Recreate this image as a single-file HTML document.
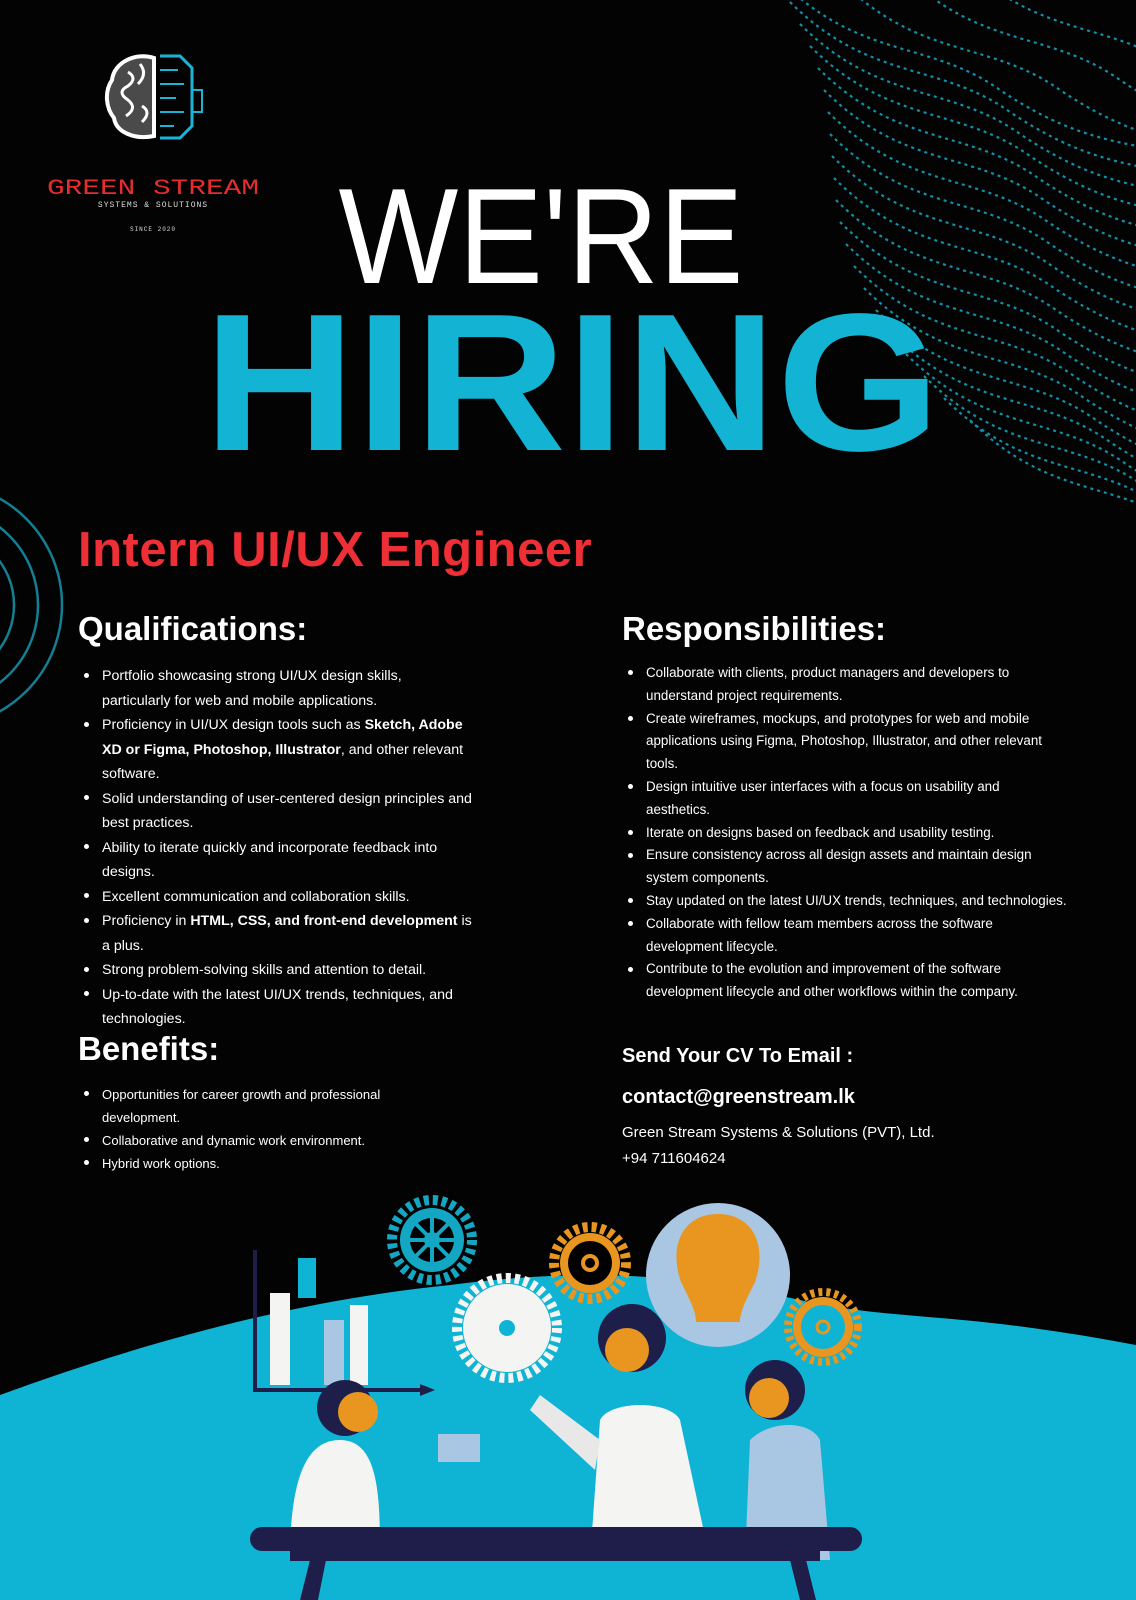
<!DOCTYPE html>
<html><head><meta charset="utf-8"><style>
*{margin:0;padding:0;box-sizing:border-box}
body{width:1136px;height:1600px;background:#030303;position:relative;overflow:hidden;font-family:"Liberation Sans","DejaVu Sans",sans-serif;color:#fff}
.abs{position:absolute}
ul{list-style:none}
li{position:relative;padding-left:24px}
li:before{content:"";position:absolute;left:6px;top:0.62em;width:5px;height:5px;border-radius:50%;background:#fff}
.q li{font-size:14.2px;line-height:24.5px}
.r li{font-size:13.4px;line-height:22.8px}
.b li{font-size:13px;line-height:23px}
h2{font-size:33px;font-weight:bold}
</style></head><body>
<svg class="abs" style="left:0;top:0" width="1136" height="1600">
<defs>
<path id="w" d="M780 -20 C860 60 930 40 1000 90 C1060 130 1100 140 1160 150" fill="none" stroke="#14a9c4" stroke-width="2.2" stroke-dasharray="3 4"/>
</defs>
<g opacity="0.85">
<use href="#w"/><use href="#w" transform="translate(10,22)"/><use href="#w" transform="translate(20,44)"/><use href="#w" transform="translate(30,66)"/><use href="#w" transform="translate(38,88)"/><use href="#w" transform="translate(44,110)"/><use href="#w" transform="translate(48,132)"/><use href="#w" transform="translate(50,154)"/><use href="#w" transform="translate(52,176)"/><use href="#w" transform="translate(54,198)"/><use href="#w" transform="translate(56,220)"/><use href="#w" transform="translate(60,242)"/><use href="#w" transform="translate(66,264)"/><use href="#w" transform="translate(74,286)"/><use href="#w" transform="translate(84,308)"/><use href="#w" transform="translate(96,330)"/><use href="#w" transform="translate(110,352)"/><use href="#w" transform="translate(126,374)"/><use href="#w" transform="translate(144,396)"/><use href="#w" transform="translate(164,418)"/><use href="#w" transform="translate(190,440)"/><use href="#w" transform="translate(60,0)"/><use href="#w" transform="translate(120,-10)"/><use href="#w" transform="translate(180,-20)"/>
</g>
<g fill="none" stroke="#137f92" stroke-width="2.5">
<circle cx="-60" cy="605" r="122"/>
<circle cx="-60" cy="605" r="98"/>
<circle cx="-60" cy="605" r="74"/>
</g>
<g transform="translate(158,96)">
<path d="M-4 -38 C-22 -44 -44 -34 -46 -16 C-54 -4 -52 12 -44 22 C-42 36 -24 44 -4 40 Z" fill="#4a4a4a" stroke="#fff" stroke-width="4"/>
<path d="M-30 -24 q10 6 0 14 q-12 6 0 14 q10 8 -2 16 M-18 -32 q8 10 -2 20 M-16 10 q10 6 0 16" fill="none" stroke="#fff" stroke-width="3"/>
<path d="M2 -40 L22 -40 L34 -28 L34 30 L22 42 L2 42" fill="none" stroke="#1ab5d6" stroke-width="3"/>
<path d="M2 -26 H20 M2 -12 H26 M2 2 H18 M2 16 H26 M2 30 H16" stroke="#1ab5d6" stroke-width="2"/>
<rect x="34" y="-6" width="10" height="22" fill="none" stroke="#1ab5d6" stroke-width="2"/>
</g>
<text x="153" y="194" text-anchor="middle" font-family="Liberation Mono,monospace" font-size="22" fill="#e52d2d" textLength="212" lengthAdjust="spacingAndGlyphs">GREEN STREAM</text>
<text x="153" y="207" text-anchor="middle" font-family="Liberation Mono,monospace" font-size="8" fill="#ddd" letter-spacing="1">SYSTEMS &amp; SOLUTIONS</text>
<text x="153" y="231" text-anchor="middle" font-family="Liberation Mono,monospace" font-size="6" fill="#ddd" letter-spacing="1">SINCE 2020</text>
<text x="541" y="283" text-anchor="middle" font-size="136" fill="#fff" textLength="405" lengthAdjust="spacingAndGlyphs">WE'RE</text>
<text x="572" y="450" text-anchor="middle" font-size="202" fill="#12b3d3" font-weight="bold" textLength="737" lengthAdjust="spacingAndGlyphs" transform="translate(572,450) scale(1,0.97) translate(-572,-450)">HIRING</text>
<path d="M0 1395 C150 1340 300 1300 450 1285 C600 1265 700 1278 800 1300 C900 1322 950 1310 1136 1345 L1136 1600 L0 1600 Z" fill="#0fb3d4"/>
<path d="M255 1250 V1390 H420" stroke="#1d1e4a" stroke-width="4" fill="none"/>
<path d="M420 1384 L435 1390 L420 1396 Z" fill="#1d1e4a"/>
<rect x="270" y="1293" width="20" height="92" fill="#f4f4f2"/>
<rect x="298" y="1258" width="18" height="40" fill="#0fb3d4"/>
<rect x="324" y="1320" width="20" height="65" fill="#a9c6e2"/>
<rect x="350" y="1305" width="18" height="80" fill="#f4f4f2"/>
<circle cx="432" cy="1240" r="40" fill="none" stroke="#14a7c4" stroke-width="10" stroke-dasharray="5 4"/>
<circle cx="432" cy="1240" r="32" fill="#14a7c4"/><circle cx="432" cy="1240" r="22" fill="#000"/><circle cx="432" cy="1240" r="8" fill="#14a7c4"/>
<path d="M432 1218 V1262 M410 1240 H454 M416 1224 L448 1256 M448 1224 L416 1256" stroke="#14a7c4" stroke-width="4"/>
<circle cx="590" cy="1263" r="36" fill="none" stroke="#e8961f" stroke-width="10" stroke-dasharray="5 4"/>
<circle cx="590" cy="1263" r="30" fill="#e8961f"/><circle cx="590" cy="1263" r="22" fill="#000"/><circle cx="590" cy="1263" r="7" fill="none" stroke="#e8961f" stroke-width="4"/>
<circle cx="507" cy="1328" r="50" fill="none" stroke="#f4f4f2" stroke-width="10" stroke-dasharray="5 4"/>
<circle cx="507" cy="1328" r="44" fill="#f4f4f2"/><circle cx="507" cy="1328" r="8" fill="#0fb3d4"/>
<circle cx="718" cy="1275" r="72" fill="#a9c6e2"/>
<path d="M718 1214 C752 1214 768 1244 755 1282 C745 1302 740 1312 740 1322 H696 C696 1312 691 1302 681 1282 C668 1244 684 1214 718 1214 Z" fill="#e8961f"/>
<rect x="698" y="1324" width="40" height="20" fill="#a9c6e2"/>
<circle cx="823" cy="1327" r="35" fill="none" stroke="#e8961f" stroke-width="8" stroke-dasharray="4 4"/>
<circle cx="823" cy="1327" r="30" fill="#e8961f"/><circle cx="823" cy="1327" r="22" fill="#0fb3d4"/><circle cx="823" cy="1327" r="6" fill="none" stroke="#e8961f" stroke-width="3"/>
<path d="M290 1560 C290 1470 310 1440 340 1440 C380 1440 380 1500 380 1560 Z" fill="#f4f4f2"/>
<circle cx="345" cy="1408" r="28" fill="#1d1e4a"/><circle cx="358" cy="1412" r="20" fill="#e8961f"/>
<rect x="438" y="1434" width="42" height="28" fill="#a9c6e2"/>
<path d="M590 1560 L600 1420 C610 1400 670 1400 680 1420 L710 1560 Z" fill="#f4f4f2"/>
<path d="M540 1395 L600 1440 L595 1470 L530 1410 Z" fill="#e8e8e8"/>
<circle cx="632" cy="1338" r="34" fill="#1d1e4a"/><circle cx="627" cy="1350" r="22" fill="#e8961f"/>
<path d="M745 1560 L750 1440 C770 1420 810 1420 820 1440 L830 1560 Z" fill="#a9c6e2"/>
<circle cx="775" cy="1390" r="30" fill="#1d1e4a"/><circle cx="769" cy="1398" r="20" fill="#e8961f"/>
<rect x="250" y="1527" width="612" height="24" rx="12" fill="#1f1e4a"/>
<rect x="290" y="1545" width="530" height="16" fill="#1f1e4a"/>
<path d="M310 1560 L300 1600 H318 L326 1560 Z M790 1560 L800 1600 H816 L806 1560 Z" fill="#1f1e4a"/>
</svg>

<div class="abs" style="left:78px;top:522px;font-size:49px;font-weight:bold;color:#ee2f36;letter-spacing:0.5px">Intern UI/UX Engineer</div>
<h2 class="abs" style="left:78px;top:610px">Qualifications:</h2>
<h2 class="abs" style="left:622px;top:610px">Responsibilities:</h2>
<ul class="abs q" style="left:78px;top:664px;width:395px">
<li>Portfolio showcasing strong UI/UX design skills, particularly for web and mobile applications.</li>
<li>Proficiency in UI/UX design tools such as <b>Sketch, Adobe XD or Figma, Photoshop, Illustrator</b>, and other relevant software.</li>
<li>Solid understanding of user-centered design principles and best practices.</li>
<li>Ability to iterate quickly and incorporate feedback into designs.</li>
<li>Excellent communication and collaboration skills.</li>
<li>Proficiency in <b>HTML, CSS, and front-end development</b> is a plus.</li>
<li>Strong problem-solving skills and attention to detail.</li>
<li>Up-to-date with the latest UI/UX trends, techniques, and technologies.</li>
</ul>
<ul class="abs r" style="left:622px;top:662px;width:445px">
<li>Collaborate with clients, product managers and developers to understand project requirements.</li>
<li>Create wireframes, mockups, and prototypes for web and mobile applications using Figma, Photoshop, Illustrator, and other relevant tools.</li>
<li>Design intuitive user interfaces with a focus on usability and aesthetics.</li>
<li>Iterate on designs based on feedback and usability testing.</li>
<li>Ensure consistency across all design assets and maintain design system components.</li>
<li>Stay updated on the latest UI/UX trends, techniques, and technologies.</li>
<li>Collaborate with fellow team members across the software development lifecycle.</li>
<li>Contribute to the evolution and improvement of the software development lifecycle and other workflows within the company.</li>
</ul>
<h2 class="abs" style="left:78px;top:1030px">Benefits:</h2>
<ul class="abs b" style="left:78px;top:1083px;width:350px">
<li>Opportunities for career growth and professional development.</li>
<li>Collaborative and dynamic work environment.</li>
<li>Hybrid work options.</li>
</ul>
<div class="abs" style="left:622px;top:1045px;font-size:20px;font-weight:bold">Send Your CV To Email :</div>
<div class="abs" style="left:622px;top:1086px;font-size:20px;font-weight:bold">contact@greenstream.lk</div>
<div class="abs" style="left:622px;top:1124px;font-size:15px">Green Stream Systems &amp; Solutions (PVT), Ltd.</div>
<div class="abs" style="left:622px;top:1150px;font-size:15px">+94 711604624</div>
</body></html>
